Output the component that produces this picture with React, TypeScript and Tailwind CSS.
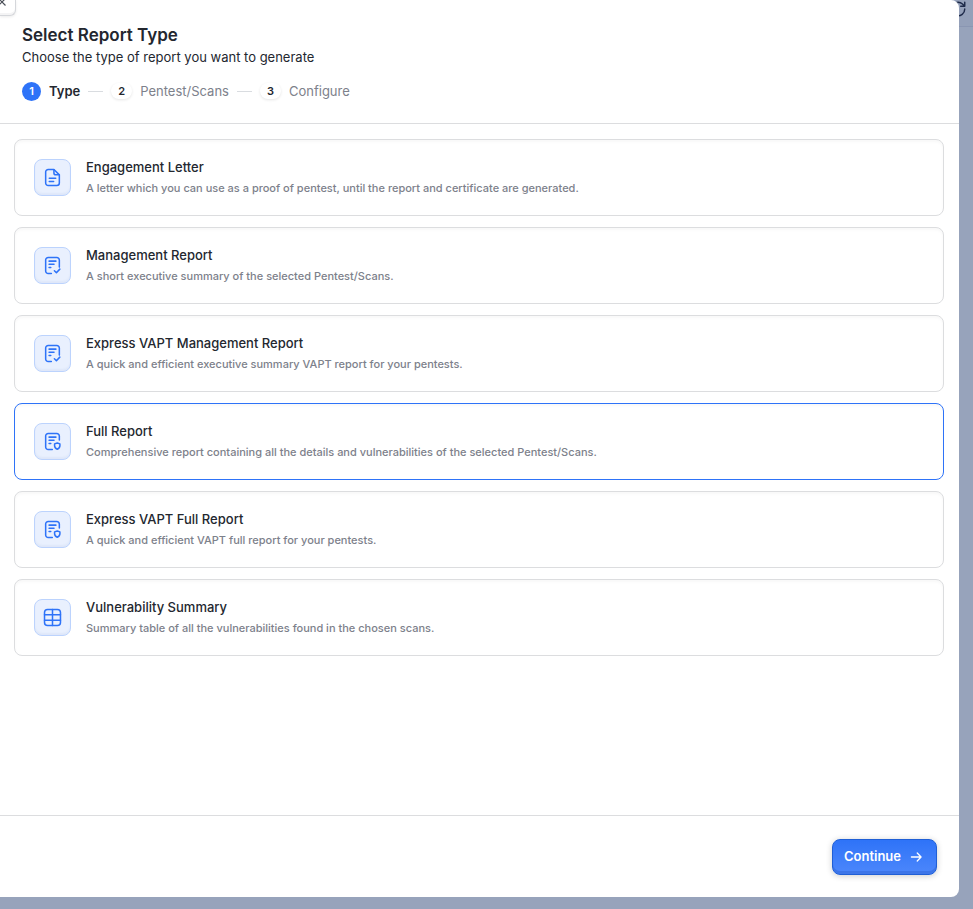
import { useState } from 'react';
import type { ReactNode } from 'react';

const Svg = ({ children, className = '' }: { children: ReactNode; className?: string }) => (
  <svg
    viewBox="0 0 20 20"
    fill="none"
    stroke="currentColor"
    strokeWidth="1.6"
    strokeLinecap="round"
    strokeLinejoin="round"
    className={className}
    aria-hidden="true"
  >
    {children}
  </svg>
);

const LetterIcon = () => (
  <Svg className="size-[19px]">
    <path d="M11.5 1.6H5.5a2.7 2.7 0 0 0-2.7 2.7v11.4a2.7 2.7 0 0 0 2.7 2.7h9a2.7 2.7 0 0 0 2.7-2.7V7.2z" />
    <path d="M11.5 1.8v3.4c0 1.1.9 2 2 2h3.5M6.6 10.9h6.8M6.6 14.1h4.6" />
  </Svg>
);

const CheckReportIcon = () => (
  <Svg className="size-[19px]">
    <path d="M8.8 18.4H5.5a2.7 2.7 0 0 1-2.7-2.7V4.3a2.7 2.7 0 0 1 2.7-2.7h9a2.7 2.7 0 0 1 2.7 2.7v7.4" />
    <path d="M6.4 5.4h7.2M6.4 8.8h5.2M6.4 12.2h1.8M12 15.6l2.1 2.1 3.6-3.9" />
  </Svg>
);

const ShieldReportIcon = () => (
  <Svg className="size-[19px]">
    <path d="M9.8 18.4H5.5a2.7 2.7 0 0 1-2.7-2.7V4.3a2.7 2.7 0 0 1 2.7-2.7h9a2.7 2.7 0 0 1 2.7 2.7v4.2" />
    <path d="M6.4 5.4h7.2M6.4 8.8h5.2M6.4 12.2h1.8" />
    <path d="m15 11.5 2.8 1v2c0 1.7-1.1 2.9-2.8 3.6-1.7-.7-2.8-1.9-2.8-3.6v-2z" />
  </Svg>
);

const TableIcon = () => (
  <Svg className="size-[19px]">
    <rect x="1.6" y="1.6" width="16.8" height="16.8" rx="3.2" />
    <path d="M10 1.6v16.8M1.6 7.2h16.8M1.6 12.8h16.8" />
  </Svg>
);

const reportTypes = [
  {
    id: 'engagement',
    icon: LetterIcon,
    title: 'Engagement Letter',
    description: 'A letter which you can use as a proof of pentest, until the report and certificate are generated.',
  },
  {
    id: 'management',
    icon: CheckReportIcon,
    title: 'Management Report',
    description: 'A short executive summary of the selected Pentest/Scans.',
  },
  {
    id: 'express-management',
    icon: CheckReportIcon,
    title: 'Express VAPT Management Report',
    description: 'A quick and efficient executive summary VAPT report for your pentests.',
  },
  {
    id: 'full',
    icon: ShieldReportIcon,
    title: 'Full Report',
    description: 'Comprehensive report containing all the details and vulnerabilities of the selected Pentest/Scans.',
  },
  {
    id: 'express-full',
    icon: ShieldReportIcon,
    title: 'Express VAPT Full Report',
    description: 'A quick and efficient VAPT full report for your pentests.',
  },
  {
    id: 'vulnerability',
    icon: TableIcon,
    title: 'Vulnerability Summary',
    description: 'Summary table of all the vulnerabilities found in the chosen scans.',
  },
];

const steps = ['Type', 'Pentest/Scans', 'Configure'];

const Steps = () => (
  <ol className="mt-3.5 flex items-center gap-2 text-[13px] leading-5">
    {steps.map((step, index) => (
      <li key={step} className="flex items-center gap-2">
        {index > 0 && <span className="h-px w-[15px] bg-[#d9dce0]" />}
        <span
          className={
            index === 0
              ? 'flex size-[19px] items-center justify-center rounded-full bg-[#2e73f8] text-[11px] leading-4 font-semibold text-white'
              : 'flex h-4 w-[21px] items-center justify-center rounded-full bg-white text-[11px] leading-4 font-semibold text-[#23272f] shadow-[0_1px_3px_rgba(0,0,0,0.1)]'
          }
        >
          {index + 1}
        </span>
        <span className={index === 0 ? 'font-semibold text-[#23272f]' : 'text-[#7d818b]'}>{step}</span>
      </li>
    ))}
  </ol>
);

const App = () => {
  const [selected, setSelected] = useState('full');

  return (
    <div className="relative flex min-h-screen bg-[#97a3bb] pr-3.5 pb-3 font-['Inter',sans-serif] text-[#23272f]">
      {/* Dimmed page behind the dialog */}
      <div className="absolute inset-x-0 top-0 h-[27px] overflow-hidden border-b border-[#8a96b2] bg-[#94a0b9]">
        <Svg className="absolute top-0 right-1.5 size-[18px] text-[#1f2b4a]">
          <path d="M17.5 10A7.5 7.5 0 1 1 15 4.5L17.5 7M17.5 2.5V7H13" />
        </Svg>
      </div>

      <main className="relative flex flex-1 flex-col rounded-r-lg bg-white">
        <button
          type="button"
          aria-label="Close"
          className="absolute top-0 left-0 flex h-4 w-4 items-start justify-start rounded-br-md border-r border-b border-[#d5d7db] bg-white shadow-[inset_0_-2px_0_#f4f4f5,0_1px_3px_rgba(0,0,0,0.08)]"
        >
          <svg viewBox="0 0 8 8" className="size-2" fill="none" stroke="#4b4f58" strokeWidth="1.2" aria-hidden="true">
            <path d="M-1 5 5-1M0 0l5.5 5.5" />
          </svg>
        </button>

        <header className="border-b border-[#dcdddf] px-[22px] pt-6 pb-[22px]">
          <h1 className="text-[17px] leading-[22px] font-semibold">Select Report Type</h1>
          <p className="mt-px text-[13px] leading-5">Choose the type of report you want to generate</p>
          <Steps />
        </header>

        <div
          role="radiogroup"
          aria-label="Report type"
          className="flex flex-1 flex-col gap-[11px] py-[15px] pr-[15px] pl-3.5"
        >
          {reportTypes.map((type) => (
            <label
              key={type.id}
              className="relative flex cursor-pointer items-center gap-[15px] rounded-lg border border-[#dcdddf] bg-white px-[19px] py-[17px] shadow-[inset_0_2px_3px_rgba(0,0,0,0.03)] has-checked:border-[#2e73f8]"
            >
              <input
                type="radio"
                name="report-type"
                value={type.id}
                checked={selected === type.id}
                onChange={() => setSelected(type.id)}
                className="absolute inset-0 cursor-pointer opacity-0"
              />
              <span className="flex size-[37px] shrink-0 items-center justify-center rounded-lg border border-[#bcd3fd] bg-[#e9f0fe] text-[#2e73f8] shadow-[inset_0_-2px_2px_rgba(40,80,150,0.05)]">
                <type.icon />
              </span>
              <span className="flex flex-col">
                <span className="text-[13px] leading-[21px] font-medium">{type.title}</span>
                <span className="text-[11px] leading-5 font-medium text-[#7d818b]">{type.description}</span>
              </span>
            </label>
          ))}
        </div>

        <footer className="flex justify-end border-t border-[#dcdddf] px-[22px] pt-[23px] pb-[22px]">
          <button
            type="button"
            className="flex h-9 items-center gap-2 rounded-lg border border-[#1f5fd6] bg-linear-to-b from-[#2e73f8] to-[#4c87fb] px-[11px] text-[13px] font-semibold text-white shadow-[inset_0_-3px_0_rgba(30,80,190,0.3),0_1px_6px_rgba(0,0,0,0.2)]"
          >
            Continue
            <Svg className="size-4">
              <path d="M3 10h12M10.3 5l4.8 5-4.8 5" />
            </Svg>
          </button>
        </footer>
      </main>
    </div>
  );
};

export default App;
